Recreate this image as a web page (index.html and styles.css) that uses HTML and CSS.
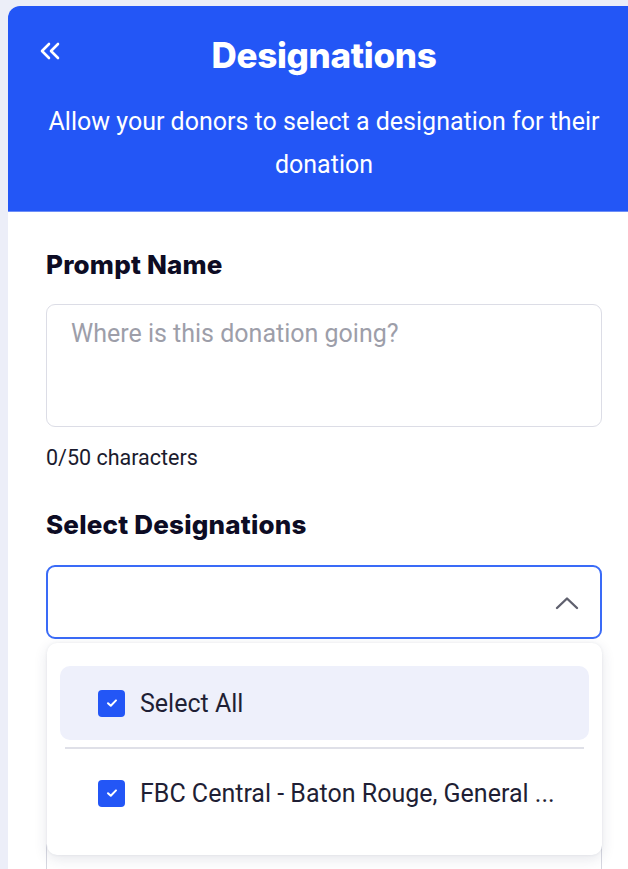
FILE: index.html
```html
<!DOCTYPE html>
<html lang="en">
<head>
<meta charset="utf-8">
<title>Designations</title>
<link rel="stylesheet" href="styles.css">
</head>
<body>
<div class="panel">
  <header class="header">
    <button class="back" aria-label="Back">
      <svg width="22" height="18" viewBox="0 0 22 18" fill="none" stroke="#fff" stroke-width="2.6" stroke-linecap="round" stroke-linejoin="round"><path d="M10 2 L3 9 L10 16"/><path d="M19 2 L12 9 L19 16"/></svg>
    </button>
    <h1 class="title">Designations</h1>
    <p class="subtitle">Allow your donors to select a designation for their donation</p>
  </header>
  <main class="content">
    <section class="field">
      <h2 class="label">Prompt Name</h2>
      <div class="textarea"><span class="placeholder">Where is this donation going?</span></div>
      <div class="counter">0/50 characters</div>
    </section>
    <section class="field field-select">
      <h2 class="label">Select Designations</h2>
      <div class="select">
        <svg class="chevron" width="24" height="14" viewBox="0 0 24 14" fill="none" stroke="#5f606e" stroke-width="2.4" stroke-linecap="round" stroke-linejoin="round"><path d="M2 12 L12 2.5 L22 12"/></svg>
      </div>
      <div class="next-input"></div>
      <div class="dropdown">
        <div class="option option-active">
          <span class="check"><svg width="12" height="10" viewBox="0 0 12 10" fill="none" stroke="#fff" stroke-width="2" stroke-linecap="round" stroke-linejoin="round"><path d="M2 5.2 L4.8 7.8 L10 2.4"/></svg></span>
          <span class="option-text">Select All</span>
        </div>
        <div class="divider"></div>
        <div class="option">
          <span class="check"><svg width="12" height="10" viewBox="0 0 12 10" fill="none" stroke="#fff" stroke-width="2" stroke-linecap="round" stroke-linejoin="round"><path d="M2 5.2 L4.8 7.8 L10 2.4"/></svg></span>
          <span class="option-text">FBC Central - Baton Rouge, General ...</span>
        </div>
      </div>
    </section>
  </main>
</div>
</body>
</html>
```
FILE: styles.css
```css
* { box-sizing: border-box; }
html, body { margin: 0; padding: 0; }
body {
  background: #eceef8;
  overflow: hidden;
  font-family: Roboto, "Liberation Sans", sans-serif;
  height: 869px;
}
.panel {
  margin: 6px 0 0 8px;
  width: 632px;
  background: #fff;
  border-radius: 12px 0 0 0;
  min-height: 900px;
  overflow: hidden;
}
.header {
  position: relative;
  background: #2356f6;
  height: 206px;
  padding: 28px 30px 0;
  text-align: center;
  color: #fff;
  border-bottom: 1px solid #6d8ef8;
}
.back {
  position: absolute;
  left: 31px;
  top: 36px;
  background: none;
  border: 0;
  padding: 0;
  display: flex;
  cursor: pointer;
}
.title {
  margin: 0;
  font-family: Inter, sans-serif;
  font-weight: 800;
  font-size: 35px;
  line-height: 42px;
  letter-spacing: -0.3px;
}
.subtitle {
  margin: 24px 0 0;
  font-size: 25px;
  line-height: 43px;
  font-weight: 400;
}
.content {
  padding: 38px 38px 0;
}
.label {
  margin: 0;
  font-family: Inter, sans-serif;
  font-weight: 800;
  font-size: 26px;
  line-height: 30px;
  color: #0d0c24;
  letter-spacing: 0.2px;
}
.textarea {
  margin-top: 24px;
  height: 123px;
  border: 1px solid #dcdde6;
  border-radius: 9px;
  padding: 14px 24px;
}
.placeholder {
  font-size: 25px;
  color: #9d9ea9;
}
.counter {
  margin-top: 18px;
  font-size: 21.5px;
  line-height: 25px;
  color: #1b1b2e;
}
.field-select {
  position: relative;
  margin-top: 40px;
}
.select {
  margin-top: 25px;
  height: 74px;
  border: 2px solid #3a6bf7;
  border-radius: 9px;
  display: flex;
  align-items: center;
  justify-content: flex-end;
  padding-right: 21px;
}
.chevron { margin-top: 2px; }
.next-input {
  margin-top: 200px;
  height: 40px;
  border: 1px solid #d6d7e0;
  border-radius: 9px;
}
.dropdown {
  position: absolute;
  left: 1px;
  right: 0;
  top: 133px;
  height: 212px;
  background: #fff;
  border-radius: 10px;
  box-shadow: 0 4px 14px rgba(40, 48, 90, 0.12), 0 0 3px rgba(40, 48, 90, 0.08);
  padding: 23px 13px 0;
}
.option {
  display: flex;
  align-items: center;
  height: 74px;
  padding-left: 38px;
  gap: 15px;
  border-radius: 10px;
}
.option-active { background: #eef0fb; }
.divider {
  height: 2px;
  background: #dfe0e8;
  margin: 7px 5px 0;
}
.option + .divider + .option { height: 88px; }
.check {
  flex: none;
  width: 27px;
  height: 27px;
  border-radius: 4px;
  background: #2356f6;
  display: flex;
  align-items: center;
  justify-content: center;
}
.option-text {
  font-size: 25px;
  color: #1f1f35;
  white-space: nowrap;
}
```
